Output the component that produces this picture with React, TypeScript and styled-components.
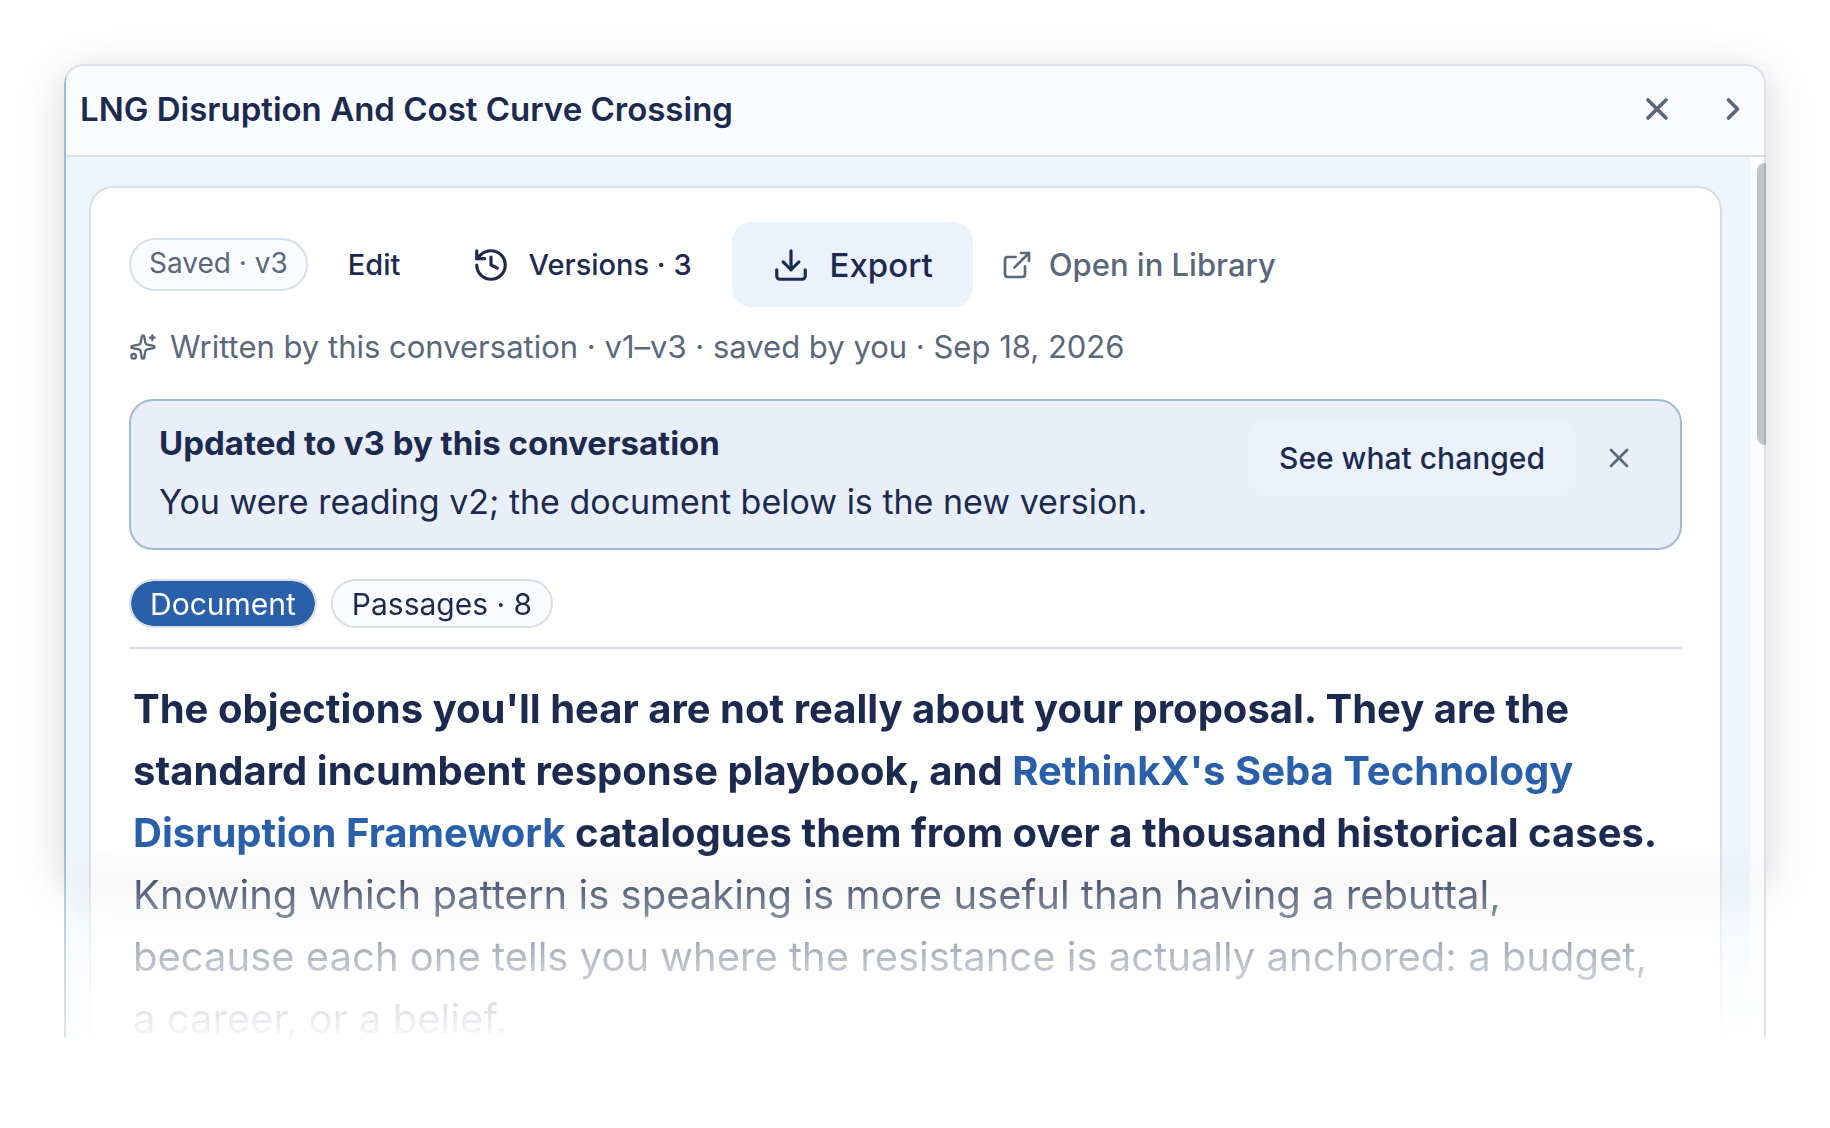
import React from "react";
import styled, { createGlobalStyle } from "styled-components";
import { X, ChevronRight, History, Download, ExternalLink } from "lucide-react";

const ink = "#1b2a4e";
const muted = "#5b677b";
const line = "#d8dfe8";

const Global = createGlobalStyle`
  *, *::before, *::after { box-sizing: border-box; }
  body { margin: 0; background: #fff; color: ${ink}; font-family: Inter, "Open Sans", sans-serif; }
  button { font: inherit; color: inherit; background: none; border: 0; padding: 0; cursor: pointer; }
  h1, h2, p { margin: 0; }
  svg { display: block; flex: none; }
`;

const Page = styled.main`
  padding: 64px;
`;

const Stage = styled.div`
  position: relative;
`;

const Shadow = styled.div`
  position: absolute;
  inset: 10px 0 163px;
  border-radius: 20px;
  background: rgba(0, 0, 0, 0.17);
  filter: blur(22px);
`;

const Panel = styled.section`
  position: relative;
  height: 989px;
  overflow: hidden;
  display: flex;
  flex-direction: column;
  border-radius: 20px 20px 0 0;
  background: #edf5ff;
  box-shadow: inset 2px 0 #a9d3ee;
  mask-image: linear-gradient(
    #000 784px,
    rgba(0, 0, 0, 0.58) 842px,
    rgba(0, 0, 0, 0.26) 906px,
    rgba(0, 0, 0, 0.05) 968px,
    transparent 988px
  );
`;

const Frame = styled.div`
  position: absolute;
  inset: 0 0 16px;
  border: 2px solid rgba(34, 50, 100, 0.13);
  border-bottom: 0;
  border-radius: 20px 20px 0 0;
  pointer-events: none;
`;

const Header = styled.header`
  display: flex;
  align-items: center;
  justify-content: space-between;
  height: 93px;
  flex: none;
  margin-left: 2px;
  padding: 0 15px 2px 14px;
  background: #fbfcff;
  border-bottom: 2px solid ${line};
`;

const Title = styled.h1`
  font-size: 33px;
  line-height: 48px;
  font-weight: 600;
`;

const HeaderActions = styled.div`
  display: flex;
  gap: 40px;
  color: ${muted};
`;

const Body = styled.div`
  display: flex;
  flex: 1;
  min-height: 0;
`;

const Scroller = styled.div`
  flex: 1;
  min-width: 0;
  padding: 29px 28px 0 25px;
`;

const Track = styled.div`
  width: 16px;
  padding: 6px 0 0 7px;
  background: #fafcff;
`;

const Thumb = styled.div`
  height: 282px;
  border-radius: 8px 0 0 8px;
  background: #c0c5ca;
`;

const Card = styled.article`
  padding: 34px 38px;
  border: 2px solid ${line};
  border-radius: 24px 24px 0 0;
  background: #fff;
`;

const Toolbar = styled.div`
  display: flex;
  align-items: center;
  gap: 8px;
  height: 85px;
`;

const Status = styled.span`
  height: 53px;
  padding: 0 18px;
  border: 2px solid ${line};
  border-radius: 27px;
  background: #fafcff;
  color: ${muted};
  font-size: 28px;
  line-height: 46px;
`;

const TextButton = styled.button`
  && {
    display: flex;
    align-items: center;
    gap: 18px;
    height: 76px;
    padding: 0 32px;
    font-size: 29px;
    font-weight: 500;
  }
`;

const ExportButton = styled(TextButton)`
  && {
    gap: 20px;
    height: 85px;
    padding: 0 40px;
    border-radius: 20px;
    background: #ebf2fc;
    font-size: 33px;
  }
`;

const LibraryLink = styled.a`
  display: flex;
  align-items: center;
  gap: 16px;
  margin-left: 20px;
  color: ${muted};
  font-size: 31px;
  font-weight: 500;
  text-decoration: none;
`;

const Meta = styled.p`
  display: flex;
  align-items: center;
  gap: 13px;
  margin-top: 16px;
  color: ${muted};
  font-size: 31px;
  line-height: 48px;
`;

const Notice = styled.section`
  display: flex;
  align-items: flex-start;
  margin-top: 28px;
  height: 151px;
  padding: 13px 45px 0 28px;
  border: 2px solid #a3b8d8;
  border-radius: 24px;
  background: #e9eff8;
`;

const NoticeText = styled.div`
  flex: 1;
  font-size: 34px;
  line-height: 59px;
`;

const NoticeTitle = styled.h2`
  font-size: 33px;
  line-height: 58px;
  font-weight: 700;
`;

const ChangeButton = styled(TextButton)`
  && {
    margin: 6px 26px 0 0;
    border-radius: 20px;
    background: #ebf2fc;
    font-size: 30px;
  }
`;

const Dismiss = styled.button`
  && {
    display: flex;
    align-items: center;
    height: 76px;
    margin-top: 6px;
    color: ${muted};
  }
`;

const Tabs = styled.div`
  display: flex;
  gap: 14px;
  margin-top: 29px;
  padding-bottom: 19px;
  border-bottom: 2px solid ${line};
`;

const Tab = styled.button<{ $active?: boolean }>`
  && {
    height: 49px;
    padding: 0 19px;
    border: 2px solid ${line};
    border-radius: 25px;
    background: ${(p) => (p.$active ? "#2960a9" : "#fbfcff")};
    background-clip: padding-box;
    color: ${(p) => (p.$active ? "#fff" : ink)};
    font-size: 30px;
    line-height: 44px;
  }
`;

const Prose = styled.p`
  margin: 29px 0 0;
  padding-left: 4px;
  font-size: 40px;
  line-height: 62px;
  white-space: nowrap;
`;

const Strong = styled.strong`
  font-weight: 700;
`;

const ProseLink = styled.a`
  color: #2960a9;
  text-decoration: none;
`;

const Sparkle = () => (
  <svg width="28" height="28" viewBox="0 0 24 24" fill="none" stroke="currentColor" strokeWidth="2" strokeLinecap="round" strokeLinejoin="round" aria-hidden="true">
    <path d="M11.017 2.814a1 1 0 0 1 1.966 0l1.051 5.558a2 2 0 0 0 1.594 1.594l5.558 1.051a1 1 0 0 1 0 1.966l-5.558 1.051a2 2 0 0 0-1.594 1.594l-1.051 5.558a1 1 0 0 1-1.966 0l-1.051-5.558a2 2 0 0 0-1.594-1.594l-5.558-1.051a1 1 0 0 1 0-1.966l5.558-1.051a2 2 0 0 0 1.594-1.594z" />
    <path d="M20 2v4M22 4h-4" />
    <circle cx="4" cy="20" r="2" />
  </svg>
);

export default function App() {
  return (
    <Page>
      <Global />
      <Stage>
        <Shadow />
        <Panel>
          <Header>
            <Title>LNG Disruption And Cost Curve Crossing</Title>
            <HeaderActions>
              <button aria-label="Close"><X size={36} strokeWidth={2.5} /></button>
              <button aria-label="Next"><ChevronRight size={36} strokeWidth={2.5} /></button>
            </HeaderActions>
          </Header>
          <Body>
            <Scroller>
              <Card>
                <Toolbar>
                  <Status>Saved · v3</Status>
                  <TextButton>Edit</TextButton>
                  <TextButton><History size={38} />Versions · 3</TextButton>
                  <ExportButton><Download size={38} />Export</ExportButton>
                  <LibraryLink href="#"><ExternalLink size={32} />Open in Library</LibraryLink>
                </Toolbar>
                <Meta><Sparkle />Written by this conversation · v1–v3 · saved by you · Sep 18, 2026</Meta>
                <Notice>
                  <NoticeText>
                    <NoticeTitle>Updated to v3 by this conversation</NoticeTitle>
                    <p>You were reading v2; the document below is the new version.</p>
                  </NoticeText>
                  <ChangeButton>See what changed</ChangeButton>
                  <Dismiss aria-label="Dismiss"><X size={32} /></Dismiss>
                </Notice>
                <Tabs>
                  <Tab $active>Document</Tab>
                  <Tab>Passages · 8</Tab>
                </Tabs>
                <Prose>
                  <Strong>
                    The objections you'll hear are not really about your proposal. They are the<br />
                    standard incumbent response playbook, and <ProseLink href="#">RethinkX's Seba Technology<br />
                    Disruption Framework</ProseLink> catalogues them from over a thousand historical cases.
                  </Strong><br />
                  Knowing which pattern is speaking is more useful than having a rebuttal,<br />
                  because each one tells you where the resistance is actually anchored: a budget,<br />
                  a career, or a belief.
                </Prose>
              </Card>
            </Scroller>
            <Track><Thumb /></Track>
          </Body>
        </Panel>
        <Frame />
      </Stage>
    </Page>
  );
}
